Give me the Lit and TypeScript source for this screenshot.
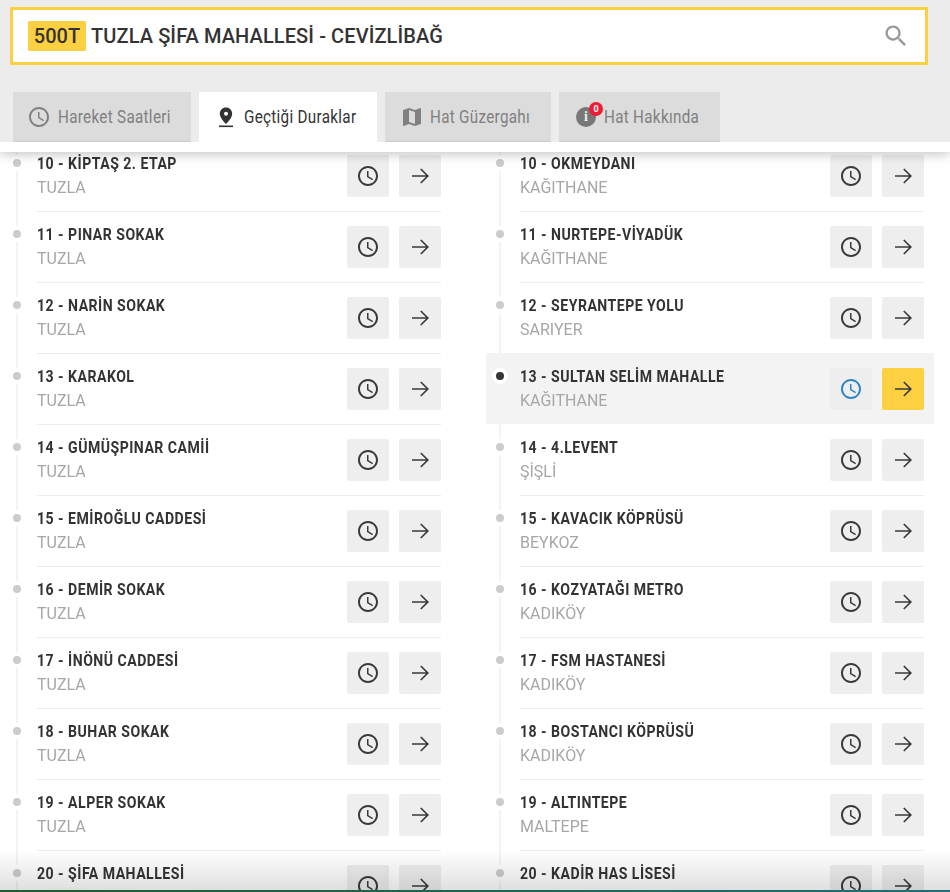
import { LitElement, html, css, svg } from "lit";
import { customElement } from "lit/decorators.js";

const left = [
  ["10 - KİPTAŞ 2. ETAP", "TUZLA"],
  ["11 - PINAR SOKAK", "TUZLA"],
  ["12 - NARİN SOKAK", "TUZLA"],
  ["13 - KARAKOL", "TUZLA"],
  ["14 - GÜMÜŞPINAR CAMİİ", "TUZLA"],
  ["15 - EMİROĞLU CADDESİ", "TUZLA"],
  ["16 - DEMİR SOKAK", "TUZLA"],
  ["17 - İNÖNÜ CADDESİ", "TUZLA"],
  ["18 - BUHAR SOKAK", "TUZLA"],
  ["19 - ALPER SOKAK", "TUZLA"],
  ["20 - ŞİFA MAHALLESİ", ""],
];
const right = [
  ["10 - OKMEYDANI", "KAĞITHANE"],
  ["11 - NURTEPE-VİYADÜK", "KAĞITHANE"],
  ["12 - SEYRANTEPE YOLU", "SARIYER"],
  ["13 - SULTAN SELİM MAHALLE", "KAĞITHANE"],
  ["14 - 4.LEVENT", "ŞİŞLİ"],
  ["15 - KAVACIK KÖPRÜSÜ", "BEYKOZ"],
  ["16 - KOZYATAĞI METRO", "KADIKÖY"],
  ["17 - FSM HASTANESİ", "KADIKÖY"],
  ["18 - BOSTANCI KÖPRÜSÜ", "KADIKÖY"],
  ["19 - ALTINTEPE", "MALTEPE"],
  ["20 - KADİR HAS LİSESİ", ""],
];

const clockPath = svg`<path d="M11.99 2C6.47 2 2 6.48 2 12s4.47 10 9.99 10C17.52 22 22 17.52 22 12S17.52 2 11.99 2zM12 20c-4.42 0-8-3.58-8-8s3.58-8 8-8 8 3.58 8 8-3.58 8-8 8zm.5-13H11v6l5.25 3.15.75-1.23-4.5-2.67z"/>`;
const clock = html`<svg viewBox="0 0 24 24" width="24" height="24" fill="currentColor">${clockPath}</svg>`;
const arrow = html`<svg viewBox="0 0 24 24" width="24" height="24" fill="none" stroke="currentColor" stroke-width="1.7"><path d="M4 12H19.500M12.800 5 19.800 12l-7 7"/></svg>`;

@customElement("app-root")
export class AppRoot extends LitElement {
  static styles = css`
    :host { display: block; position: relative; height: 892px; overflow: hidden; background: #fff; font-family: Roboto, "Liberation Sans", sans-serif; }
    .top { position: relative; z-index: 2; background: #fff; box-shadow: 0 1px 12px rgba(0,0,0,.28); }
    .head { background: #ececec; height: 142px; padding: 7px 22px 0 10px; box-sizing: border-box; }
    .search { height: 58px; box-sizing: border-box; border: 3px solid #fdd042; background: #fff; display: flex; align-items: center; padding: 0 15px 0 15px; }
    .code { background: #fdd042; color: #333; font-size: 20px; font-weight: 500; height: 30px; width: 58px; border-radius: 1px; display: flex; align-items: center; justify-content: center; }
    .name { margin-left: 5px; font-size: 20px; font-weight: 500; letter-spacing: .1px; color: #333; flex: 1; }
    .search svg { color: #999; }
    .tabs { display: flex; gap: 8px; margin: 27px 0 0 3px; }
    .tab { height: 50px; box-sizing: border-box; background: #dcdcdc; box-shadow: inset 0 -3px 2px -2px #ccc; color: #808080; display: flex; align-items: center; font-size: 17.5px; position: relative; }
    .tab svg { flex: none; }
    .tab.on { background: #fff; box-shadow: none; color: #333; }
    .t1 { width: 178px; padding-left: 14px; }
    .t2 { width: 178px; padding-left: 15px; }
    .t3 { width: 166px; padding-left: 15px; }
    .t4 { width: 161px; padding-left: 17px; }
    .lbl { display: inline-block; transform: scaleX(.87); transform-origin: 0 50%; white-space: nowrap; margin-left: 7px; letter-spacing: .35px; }
    .t2 .lbl { margin-left: 6px; }
    .t3 .lbl { margin-left: 6px; }
    .t4 .lbl { margin-left: 8px; }
    .info { width: 20px; height: 20px; border-radius: 50%; background: #777; color: #ececec; font: 700 14px/20px "Liberation Serif", serif; text-align: center; position: relative; flex: none; }
    .badge { position: absolute; left: 13px; top: -5px; width: 14px; height: 14px; border-radius: 50%; background: #ee1c34; color: #fff; font: 700 9px/14px Roboto, sans-serif; text-align: center; }
    .strip { height: 10px; }
    .cols { display: flex; gap: 35px; margin: -12px 0 0 3px; }
    .col { width: 448px; }
    .row { height: 71px; position: relative; padding: 0 10px 0 34px; box-sizing: border-box; }
    .row::before { content: ""; position: absolute; left: 13px; top: 0; bottom: 0; width: 2px; background: #f3f3f3; }
    .dot { position: absolute; left: 6px; top: 15px; width: 16px; height: 16px; box-sizing: border-box; border-radius: 50%; border: 4px solid #fff; background: #ccc; }
    .inner { height: 71px; box-sizing: border-box; border-top: 1px solid #ececec; display: flex; align-items: flex-start; }
    .txt { flex: 1; padding-top: 13px; min-width: 0; }
    .title { font-size: 16px; line-height: 19px; font-weight: 700; letter-spacing: .55px; color: #333; transform: scaleX(.88); transform-origin: 0 50%; white-space: nowrap; }
    .sub { font-size: 16px; line-height: 19px; margin-top: 5px; color: #a6a6a6; }
    .btn { width: 42px; height: 42px; margin-top: 14px; background: #eee; border-radius: 2px; color: #3a3a3a; display: flex; align-items: center; justify-content: center; }
    .go { margin-left: 10px; }
    .row.sel { background: #f3f3f3; }
    .row.sel .inner, .row.sel + .row .inner { border-top-color: transparent; }
    .row.sel::before { display: none; }
    .row.sel .dot { background: #333; }
    .row.sel .clk { color: #2e86c8; }
    .row.sel .go { background: #fdd042; }
    .fade { position: absolute; z-index: 1; left: 0; right: 0; bottom: 0; height: 42px; background: linear-gradient(#fff, #dedede); mix-blend-mode: multiply; pointer-events: none; }
    .edge { position: absolute; z-index: 3; left: 0; right: 0; bottom: 0; height: 2px; background: linear-gradient(90deg, #1f5c2e, #1f6f78); }
  `;

  private col(rows: string[][], sel = -1) {
    return html`<div class="col">
      ${rows.map(([t, s], i) => html`<div class="row ${i === sel ? "sel" : ""}">
        <span class="dot"></span>
        <div class="inner">
          <div class="txt"><div class="title">${t}</div>${s ? html`<div class="sub">${s}</div>` : ""}</div>
          <div class="btn clk">${clock}</div>
          <div class="btn go">${arrow}</div>
        </div>
      </div>`)}
    </div>`;
  }

  render() {
    return html`
      <div class="top">
        <div class="head">
          <div class="search">
            <span class="code">500T</span>
            <span class="name">TUZLA ŞİFA MAHALLESİ - CEVİZLİBAĞ</span>
            <svg viewBox="0 0 24 24" width="28" height="28" fill="currentColor"><path d="M15.5 14h-.79l-.28-.27C15.41 12.59 16 11.11 16 9.5 16 5.91 13.09 3 9.5 3S3 5.91 3 9.5 5.91 16 9.5 16c1.61 0 3.09-.59 4.23-1.57l.27.28v.79l5 4.99L20.49 19l-4.99-5zm-6 0C7.01 14 5 11.99 5 9.5S7.01 5 9.5 5 14 7.01 14 9.5 11.99 14 9.5 14z"/></svg>
          </div>
          <div class="tabs">
            <div class="tab t1">${clock}<span class="lbl">Hareket Saatleri</span></div>
            <div class="tab on t2"><svg viewBox="0 0 24 24" width="24" height="24" fill="currentColor"><path fill-rule="evenodd" d="M12 2.500c-3.500 0-6.200 2.700-6.200 6.200 0 4.300 6.200 10.300 6.200 10.300s6.200-6 6.200-10.300c0-3.500-2.700-6.200-6.200-6.200zm0 4.300a2 2 0 1 1 0 4 2 2 0 0 1 0-4z"/><rect x="5" y="20.500" width="14" height="1.600"/></svg><span class="lbl">Geçtiği Duraklar</span></div>
            <div class="tab t3"><svg viewBox="0 0 24 24" width="24" height="24" fill="currentColor"><path d="M20.500 3l-.16.03L15 5.100 9 3 3.360 4.900c-.21.07-.36.25-.36.48V20.500c0 .28.22.5.5.5l.16-.03L9 18.900l6 2.100 5.640-1.900c.21-.07.36-.25.36-.48V3.500c0-.28-.22-.5-.5-.5zM15 19l-6-2.110V5l6 2.110V19z"/></svg><span class="lbl">Hat Güzergahı</span></div>
            <div class="tab t4"><span class="info">i<span class="badge">0</span></span><span class="lbl">Hat Hakkında</span></div>
          </div>
        </div>
        <div class="strip"></div>
      </div>
      <div class="cols">
        ${this.col(left)}
        ${this.col(right, 3)}
      </div>
      <div class="fade"></div>
      <div class="edge"></div>
    `;
  }
}
